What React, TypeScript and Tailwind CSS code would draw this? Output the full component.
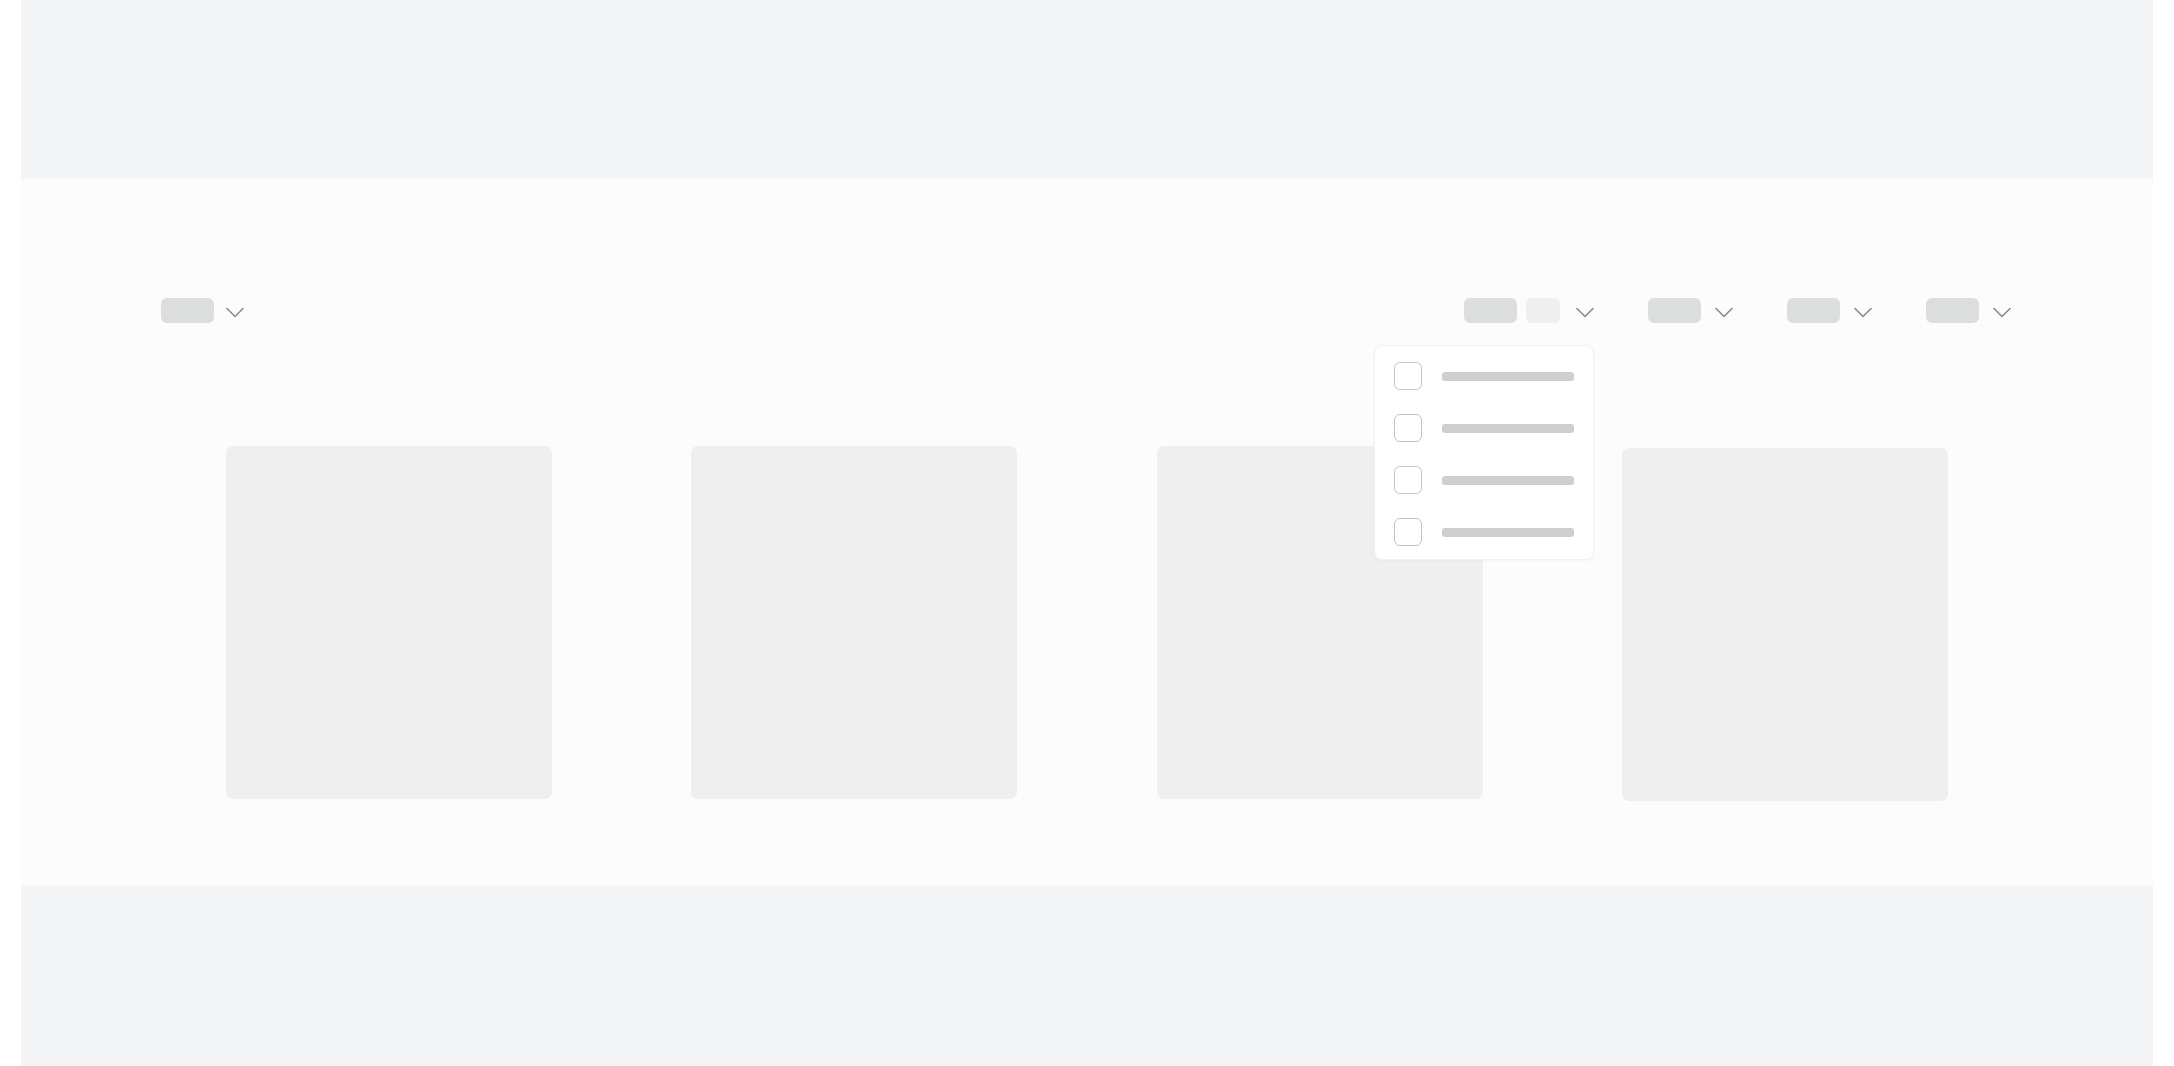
import React from 'react';

const Chevron: React.FC = () => (
    <svg width="18" height="11" viewBox="0 0 18 11" fill="none" className="shrink-0 mt-[3px]">
        <polyline points="1,1.5 9,9.5 17,1.5" stroke="#8a8a8a" strokeWidth="1.6" strokeLinecap="round" strokeLinejoin="round" />
    </svg>
);

const Pill: React.FC<{ light?: boolean; w?: string }> = ({ light, w }) => (
    <div className={`${w ?? 'w-[53px]'} h-[25px] rounded-[6px] ${light ? 'bg-[#efefef]' : 'bg-[#dcdddd]'}`} />
);

const FilterGroup: React.FC = () => (
    <div className="flex items-center gap-[14px]">
        <Pill />
        <Chevron />
    </div>
);

const DropdownMenu: React.FC = () => (
    <div className="absolute right-0 top-[47px] w-[220px] h-[215px] bg-white border border-[#f1f1f1] rounded-[8px] shadow-[0_1px_3px_rgba(0,0,0,0.03)] pt-[16px] px-[19px] flex flex-col gap-[24px] z-10">
        {[0, 1, 2, 3].map((i) => (
            <div key={i} className="flex items-center gap-[20px] h-[28px]">
                <div className="w-[28px] h-[28px] rounded-[6px] border-[1.5px] border-[#c4c4c4] bg-white shrink-0" />
                <div className="w-[132px] h-[9px] rounded-[3px] bg-[#cfcfcf]" />
            </div>
        ))}
    </div>
);

const App: React.FC = () => {
    return (
        <div className="w-full h-[1066px] bg-white px-[21px] flex flex-col overflow-hidden">
            {/* top bar placeholder */}
            <div className="h-[179px] shrink-0 bg-[#f3f4f6]" />

            {/* main content */}
            <div className="flex-1 bg-[#fcfcfc] flex flex-col">
                <div className="pt-[119px] pl-[140px] pr-[142px] flex items-center justify-between">
                    <div className="flex items-center gap-[12px]">
                        <Pill />
                        <Chevron />
                    </div>

                    <div className="flex items-center gap-[54px]">
                        <div className="relative flex items-center">
                            <Pill />
                            <div className="ml-[9px]">
                                <Pill light w="w-[34px]" />
                            </div>
                            <div className="ml-[16px] flex">
                                <Chevron />
                            </div>
                            <DropdownMenu />
                        </div>
                        <FilterGroup />
                        <FilterGroup />
                        <FilterGroup />
                    </div>
                </div>

                <div className="mt-[123px] px-[205px] flex items-start justify-between">
                    <div className="w-[326px] h-[353px] rounded-[7px] bg-[#efefef]" />
                    <div className="w-[326px] h-[353px] rounded-[7px] bg-[#efefef]" />
                    <div className="w-[326px] h-[353px] rounded-[7px] bg-[#efefef]" />
                    <div className="w-[326px] h-[353px] mt-[2px] rounded-[7px] bg-[#efefef]" />
                </div>
            </div>

            {/* footer placeholder */}
            <div className="h-[180px] shrink-0 bg-[#f3f4f6]" />
        </div>
    );
};

export default App;
